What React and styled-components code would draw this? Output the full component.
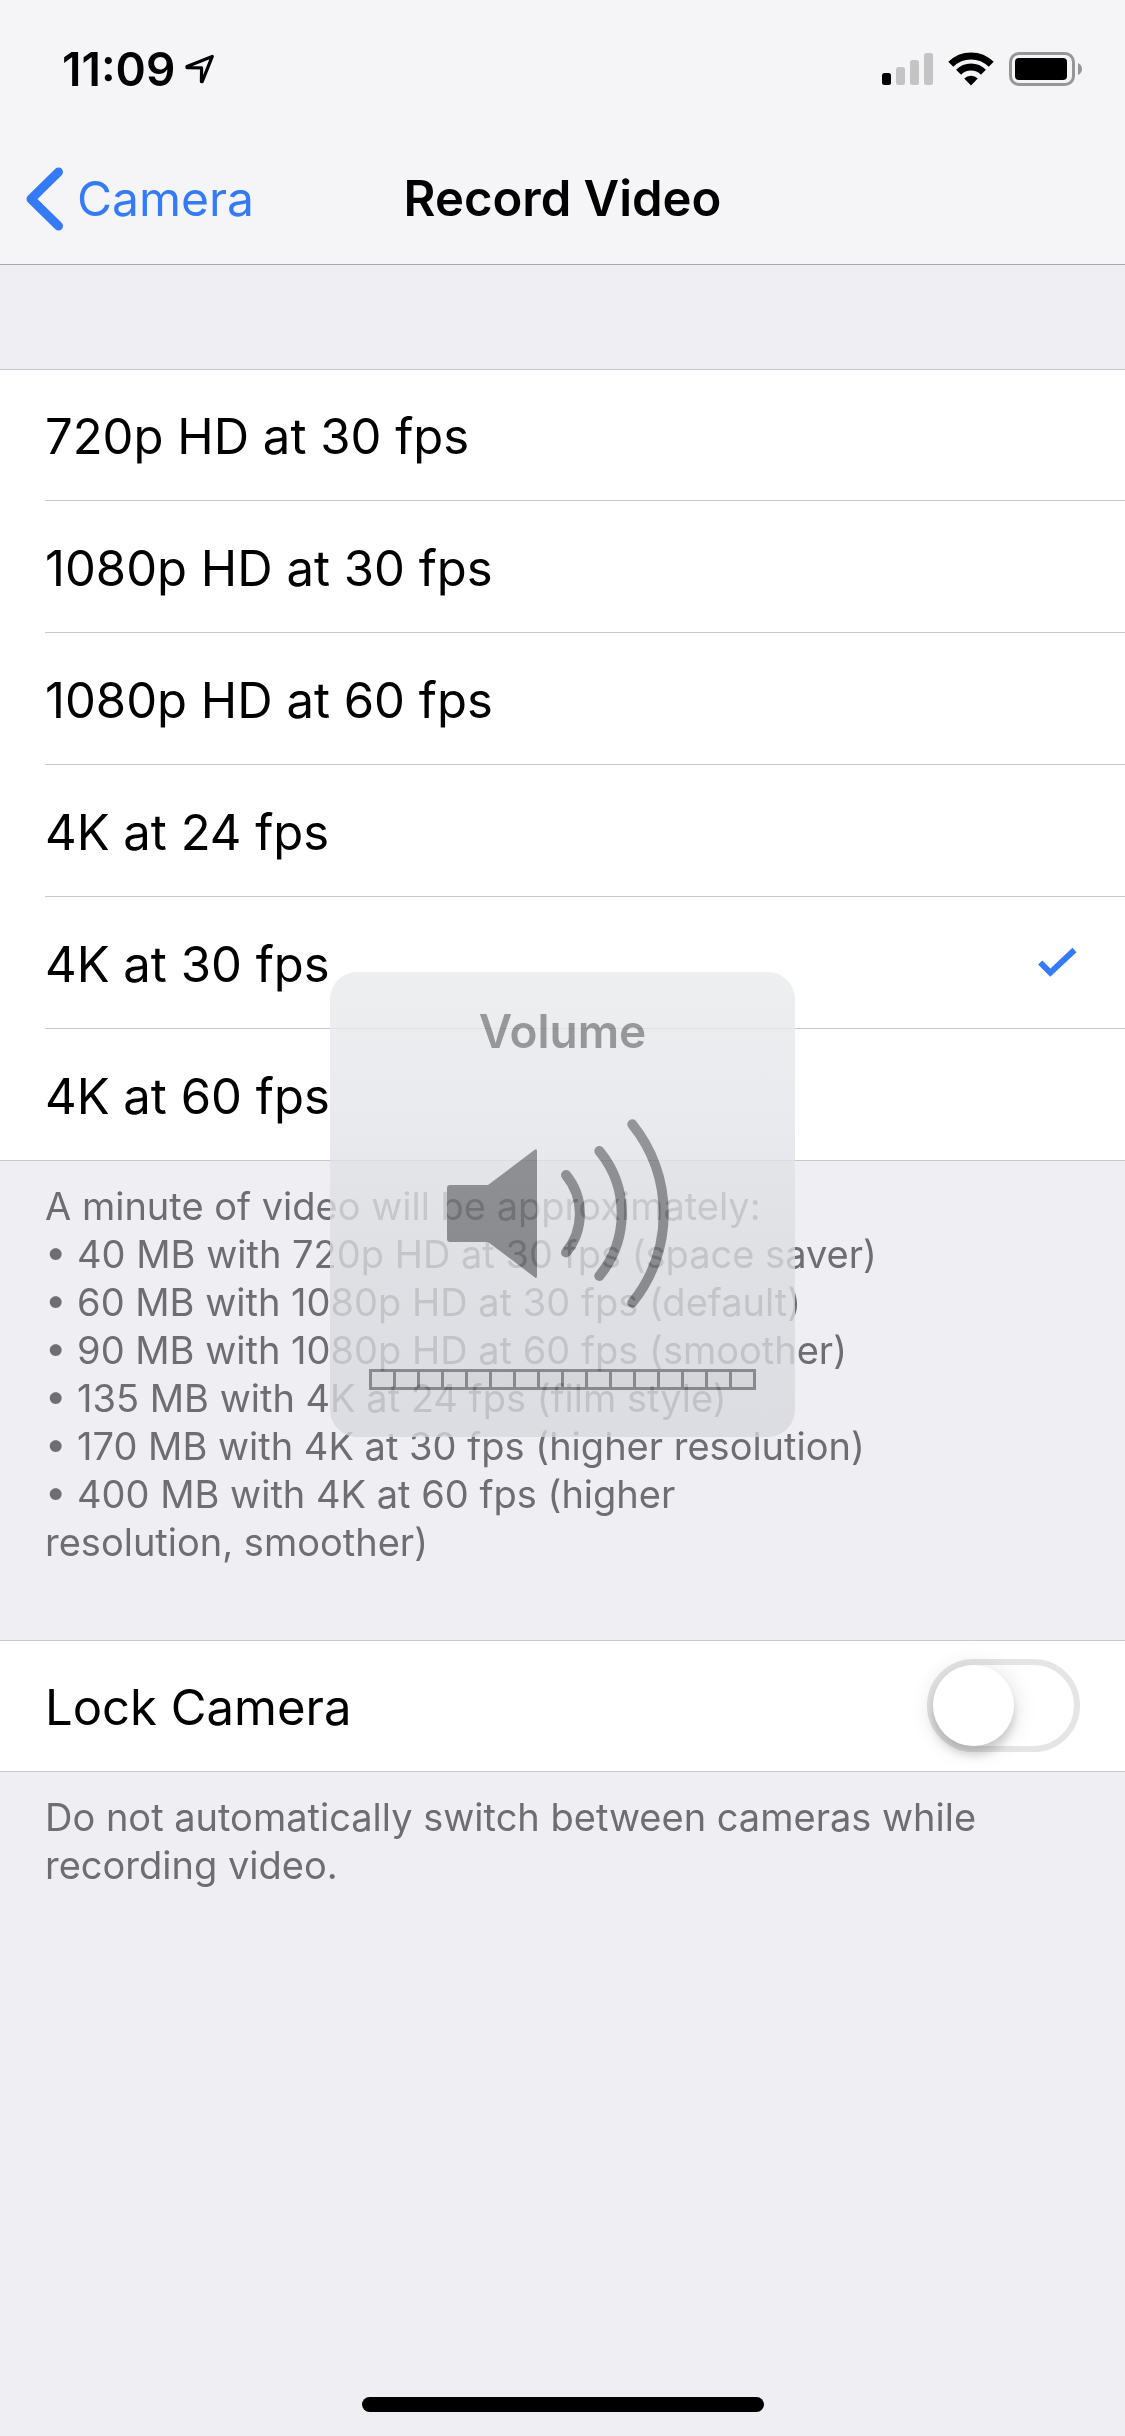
import React, { useState } from "react";
import styled, { createGlobalStyle } from "styled-components";

const GlobalStyle = createGlobalStyle`
  *, *::before, *::after { box-sizing: border-box; }
  body {
    margin: 0;
    background: #efeef3;
    font-family: Inter, "Liberation Sans", sans-serif;
    color: #000;
  }
`;

const Screen = styled.div`
  position: relative;
  display: flex;
  flex-direction: column;
  min-height: 100vh;
  background: #efeef3;
`;

const Header = styled.header`
  height: 265px;
  background: #f5f5f7;
  border-bottom: 1px solid #a9a9ac;
`;

const StatusBar = styled.div`
  display: flex;
  align-items: center;
  justify-content: space-between;
  height: 132px;
  padding: 6px 42px 0 62px;
`;

const StatusGroup = styled.div`
  display: flex;
  align-items: center;
  gap: ${(p) => p.$gap}px;
`;

const Time = styled.time`
  font-size: 46px;
  line-height: 54px;
  font-weight: 600;
`;

const NavBar = styled.nav`
  display: grid;
  grid-template-columns: 1fr auto 1fr;
  align-items: center;
  height: 132px;
  padding: 2px 24px 0;
`;

const BackLink = styled.a`
  display: flex;
  align-items: center;
  gap: 12px;
  color: #357bf7;
  font-size: 48px;
  line-height: 60px;
  text-decoration: none;
`;

const Title = styled.h1`
  margin: 0;
  font-size: 49px;
  line-height: 60px;
  font-weight: 600;
`;

const Content = styled.main`
  padding-top: 104px;
`;

const Group = styled.div`
  background: #fff;
  box-shadow: inset 0 1px #c8c7cc;
`;

const Row = styled.label`
  display: flex;
  align-items: stretch;
  height: 132px;
  padding-left: 45px;
  font-size: 49px;
  line-height: 60px;

  &:last-child {
    border-bottom: 1px solid #c8c7cc;
  }
`;

const RowBody = styled.span`
  display: flex;
  flex: 1;
  align-items: center;
  justify-content: space-between;
  padding-right: 45px;

  ${Row}:not(:last-child) & {
    border-bottom: 1px solid #c8c7cc;
  }
`;

const RowLabel = styled.span`
  padding-top: 4px;
`;

const HiddenRadio = styled.input`
  appearance: none;
  width: 0;
  height: 0;
  margin: 0;
`;

const Note = styled.p`
  margin: 0;
  padding: 21px 45px 74px;
  color: #6d6d72;
  font-size: 38px;
  line-height: 48px;
`;

const Switch = styled.input`
  appearance: none;
  display: flex;
  width: 153px;
  height: 93px;
  margin: 0;
  border: 6px solid #e5e5e5;
  border-radius: 47px;
  background: #fff;

  &::before {
    content: "";
    width: 81px;
    height: 81px;
    border-radius: 50%;
    background: #fff;
    box-shadow: 0 9px 9px rgba(0, 0, 0, 0.14), 0 3px 24px rgba(0, 0, 0, 0.14);
  }

  &:checked {
    border-color: #4cd964;
    background: #4cd964;
    justify-content: flex-end;
  }
`;

const HomeIndicator = styled.div`
  width: 402px;
  height: 15px;
  margin: auto auto 24px;
  border-radius: 8px;
  background: #000;
`;

const Hud = styled.section`
  position: absolute;
  top: 972px;
  left: 0;
  right: 0;
  display: flex;
  flex-direction: column;
  align-items: center;
  width: 465px;
  height: 465px;
  margin: 0 auto;
  padding: 29px 0 47px;
  border-radius: 27px;
  background: linear-gradient(
    rgba(233, 234, 236, 0.79) 0%,
    rgba(227, 229, 233, 0.79) 30%,
    rgba(219, 221, 225, 0.79) 60%,
    rgba(215, 216, 221, 0.79) 100%
  );
`;

const HudTitle = styled.h2`
  margin: 0;
  color: #555;
  font-size: 46px;
  line-height: 60px;
  font-weight: 600;
  mix-blend-mode: difference;
`;

const HudIcon = styled.svg`
  margin-top: 58px;
  mix-blend-mode: difference;
`;

const VolumeBar = styled.div`
  display: flex;
  gap: 3px;
  width: 387px;
  height: 21px;
  margin-top: auto;
  border: 3px solid #555;
  background: #555;
  mix-blend-mode: difference;
`;

const Segment = styled.span`
  flex: 1;
  background: #070709;
`;

const options = [
  "720p HD at 30 fps",
  "1080p HD at 30 fps",
  "1080p HD at 60 fps",
  "4K at 24 fps",
  "4K at 30 fps",
  "4K at 60 fps",
];

const sizes = [
  "40 MB with 720p HD at 30 fps (space saver)",
  "60 MB with 1080p HD at 30 fps (default)",
  "90 MB with 1080p HD at 60 fps (smoother)",
  "135 MB with 4K at 24 fps (film style)",
  "170 MB with 4K at 30 fps (higher resolution)",
  "400 MB with 4K at 60 fps (higher",
];

const LocationIcon = () => (
  <svg width="30" height="30" viewBox="0 0 30 30" aria-hidden="true">
    <path
      d="M27.3 2.4 L2 12.6 V13.6 L16.6 13.9 L16.4 27.6 H17.2 Z"
      fill="none"
      stroke="#000"
      strokeWidth="3.2"
      strokeLinejoin="round"
    />
  </svg>
);

const SignalIcon = () => (
  <svg width="51" height="34" viewBox="0 0 51 34" aria-hidden="true">
    <rect x="0" y="21" width="9" height="12" rx="2.5" />
    <g fill="#c4c4c5">
      <rect x="14" y="15" width="9" height="18" rx="2.5" />
      <rect x="28" y="8" width="9" height="25" rx="2.5" />
      <rect x="42" y="1" width="9" height="32" rx="2.5" />
    </g>
  </svg>
);

const WifiIcon = () => (
  <svg width="46" height="34" viewBox="0 0 46 34" aria-hidden="true">
    <g fill="none" stroke="#000" strokeWidth="7">
      <path d="M2.8 12.3 A28.5 28.5 0 0 1 43.2 12.3" />
      <path d="M10.6 20.2 A17.5 17.5 0 0 1 35.4 20.2" />
    </g>
    <path d="M23 33.5 L16.2 26.6 A9.6 9.6 0 0 1 29.8 26.6 Z" />
  </svg>
);

const BatteryIcon = () => (
  <svg width="74" height="34" viewBox="0 0 74 34" aria-hidden="true">
    <rect x="1.5" y="1.5" width="63" height="31" rx="8.5" fill="none" stroke="#969697" strokeWidth="3" />
    <rect x="6" y="6" width="52" height="22" rx="4" />
    <path d="M69 11 Q73 13 73 17 T69 23 Z" fill="#969697" />
  </svg>
);

const ChevronIcon = () => (
  <svg width="41" height="64" viewBox="0 0 41 64" aria-hidden="true">
    <path
      d="M34.5 5 L7 32 L34.5 59"
      fill="none"
      stroke="#357bf7"
      strokeWidth="9"
      strokeLinecap="round"
      strokeLinejoin="round"
    />
  </svg>
);

const CheckIcon = () => (
  <svg width="42" height="32" viewBox="0 0 42 32" aria-hidden="true">
    <path d="M2.2 15.5 L12.3 25.6 L36.5 3" fill="none" stroke="#357bf7" strokeWidth="6" />
  </svg>
);

const SpeakerIcon = () => (
  <HudIcon width="231" height="190" viewBox="117 147 231 190" aria-hidden="true">
    <path
      d="M120 213 H158 L205 177.6 Q207 176.5 207 179 V304 Q207 307 205 305.5 L158 270 H120 Q117 270 117 267 V216 Q117 213 120 213 Z"
      fill="#555"
    />
    <g fill="none" stroke="#555" strokeWidth="10" strokeLinecap="round">
      <path d="M236 203 A61 61 0 0 1 236 280.4" />
      <path d="M269.3 179 A98.4 98.4 0 0 1 269.3 304" />
      <path d="M302.3 152.3 A142.4 142.4 0 0 1 302.3 330.7" />
    </g>
  </HudIcon>
);

export default function App() {
  const [selected, setSelected] = useState("4K at 30 fps");

  return (
    <Screen>
      <GlobalStyle />
      <Header>
        <StatusBar>
          <StatusGroup $gap={10}>
            <Time>11:09</Time>
            <LocationIcon />
          </StatusGroup>
          <StatusGroup $gap={15}>
            <SignalIcon />
            <WifiIcon />
            <BatteryIcon />
          </StatusGroup>
        </StatusBar>
        <NavBar>
          <BackLink href="#camera">
            <ChevronIcon />
            Camera
          </BackLink>
          <Title>Record Video</Title>
        </NavBar>
      </Header>

      <Content>
        <Group role="radiogroup" aria-label="Record Video">
          {options.map((option) => (
            <Row key={option}>
              <HiddenRadio
                type="radio"
                name="format"
                checked={selected === option}
                onChange={() => setSelected(option)}
              />
              <RowBody>
                <RowLabel>{option}</RowLabel>
                {selected === option && <CheckIcon />}
              </RowBody>
            </Row>
          ))}
        </Group>
        <Note>
          A minute of video will be approximately:
          {sizes.map((size) => (
            <React.Fragment key={size}>
              <br />• {size}
            </React.Fragment>
          ))}
          <br />
          resolution, smoother)
        </Note>

        <Group>
          <Row>
            <RowBody>
              <RowLabel>Lock Camera</RowLabel>
              <Switch type="checkbox" role="switch" />
            </RowBody>
          </Row>
        </Group>
        <Note>Do not automatically switch between cameras while recording video.</Note>
      </Content>

      <HomeIndicator />

      <Hud aria-label="Volume level">
        <HudTitle>Volume</HudTitle>
        <SpeakerIcon />
        <VolumeBar>
          {Array.from({ length: 16 }, (_, i) => (
            <Segment key={i} />
          ))}
        </VolumeBar>
      </Hud>
    </Screen>
  );
}
